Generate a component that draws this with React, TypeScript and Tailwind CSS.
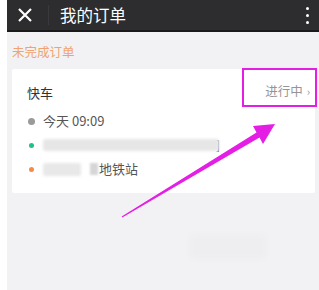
import React from "react";

export default function App() {
  const font = { fontFamily: '"Noto Sans CJK SC", "Noto Sans", sans-serif' };
  return (
    <div className="relative flex h-[290px] w-[319px] bg-white" style={font}>
      <div className="ml-[7px] flex flex-1 flex-col bg-[#f2f2f4]">
        <div className="flex h-[32px] items-center border-b-2 border-[#1a1a1a] bg-[#2d2d2f]">
          <div className="flex w-[32px] items-center justify-center pl-[4px]">
            <svg width="16" height="16" viewBox="0 0 16 16">
              <path d="M2 2L14 14M14 2L2 14" stroke="#ffffff" strokeWidth="2.2" />
            </svg>
          </div>
          <div className="ml-[9px] h-[20px] w-px bg-[#3a3a3c]" />
          <div className="ml-[11px] text-[16.5px] leading-none text-white">我的订单</div>
          <div className="ml-auto mr-[10px] flex flex-col gap-[4px]">
            <div className="h-[3px] w-[3px] rounded-full bg-white" />
            <div className="h-[3px] w-[3px] rounded-full bg-white" />
            <div className="h-[3px] w-[3px] rounded-full bg-white" />
          </div>
        </div>
        <div className="px-[5px] pt-[12px] text-[12.5px] leading-[16px] text-[#f0a36e]">未完成订单</div>
        <div className="relative ml-[5px] mr-[4px] mt-[9px] flex h-[124px] flex-col rounded-[2px] bg-white">
          <div className="flex h-[40px] items-center pl-[15px] pt-[7px]">
            <span className="text-[13px] text-[#333333]">快车</span>
          </div>
          <div className="absolute right-[-2px] top-[-1px] flex h-[39px] w-[75px] items-center justify-end border-2 border-[#e41ee4] pr-[5px] pt-[7px] text-[12.5px] text-[#959595]">
            进行中<span className="ml-[4px] text-[11px]">›</span>
          </div>
          <div className="flex h-[24px] items-center pl-[16px]">
            <div className="h-[7px] w-[7px] rounded-full bg-[#9a9a9a]" />
            <span className="ml-[8px] text-[13px] text-[#555555]">今天 09:09</span>
          </div>
          <div className="flex h-[24px] items-center pl-[17px]">
            <div className="h-[5px] w-[5px] rounded-full bg-[#1fbf8f]" />
            <div className="ml-[9px] h-[12px] w-[176px] rounded-[3px] bg-[#e6e6e6] blur-[1.5px]" />
            <span className="ml-[-3px] text-[12px] text-[#666666]">]</span>
          </div>
          <div className="flex h-[24px] items-center pl-[17px]">
            <div className="h-[5px] w-[5px] rounded-full bg-[#f58a4a]" />
            <div className="ml-[9px] h-[13px] w-[38px] rounded-[2px] bg-[#e8e8e8] blur-[1.5px]" />
            <div className="ml-[9px] h-[12px] w-[8px] bg-[#d6d6d6] blur-[1px]" />
            <span className="ml-[1px] text-[13px] text-[#555555]">地铁站</span>
          </div>
        </div>
        <div className="ml-[183px] mt-[42px] h-[24px] w-[76px] rounded bg-[#eeeef0] blur-[2px]" />
      </div>
      <svg className="pointer-events-none absolute left-0 top-0" width="319" height="290" viewBox="0 0 319 290">
        <polygon points="121.7,216.6 256.5,132.4 253,126 275,124 263,144 259.5,137.6 122.3,217.4" fill="#e41ee4" />
      </svg>
    </div>
  );
}
